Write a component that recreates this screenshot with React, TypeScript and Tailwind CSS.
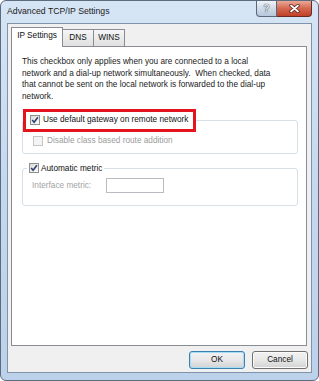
import React from 'react';

function Check({ checked, disabled }: { checked?: boolean; disabled?: boolean }) {
  return (
    <span
      className={`flex h-[10px] w-[10px] shrink-0 items-center justify-center border ${
        disabled
          ? 'border-[#c5c5c5] bg-[#f4f4f4]'
          : 'border-[#8e8f8f] bg-gradient-to-br from-[#dadada] to-[#fbfbfb]'
      }`}
    >
      {checked && (
        <svg width="8" height="8" viewBox="0 0 8 8">
          <path d="M1.2 4.1 L3.1 6.3 L6.9 1.2" fill="none" stroke="#2c3e73" strokeWidth="1.5" />
        </svg>
      )}
    </span>
  );
}

export default function App() {
  return (
    <div className="flex h-[381px] w-[319px] flex-col rounded-[6px] border border-[#5d6b7e] bg-gradient-to-b from-[#d6e5f5] via-[#c4d8ee] to-[#bcd2ea] px-[6px] pb-[7px] font-['Liberation_Sans',Arial,sans-serif] text-[8.25px] text-[#111]">
      {/* title bar */}
      <div className="flex h-[22px] shrink-0 items-center justify-between">
        <span className="text-[8.7px] text-[#1a1a1a]">Advanced TCP/IP Settings</span>
        <div className="flex h-[16px] self-start">
          <div className="flex w-[21px] items-center justify-center rounded-bl-[4px] border border-t-0 border-[#5a677b] bg-gradient-to-b from-[#eef3f8] via-[#cfdbe8] to-[#b6c6da]">
            <span className="text-[10px] font-bold leading-none text-[#e9edf2] [text-shadow:0_0_1px_#3b4556,0_0_1px_#3b4556]">?</span>
          </div>
          <div className="flex w-[35px] items-center justify-center rounded-br-[4px] border border-l-0 border-t-0 border-[#6b2a1f] bg-gradient-to-b from-[#e9a898] via-[#d4674f] to-[#c13f27]">
            <svg width="11" height="9" viewBox="0 0 11 9">
              <path d="M2 1.5 L9 7.5 M9 1.5 L2 7.5" stroke="#5a1c12" strokeWidth="3.4" strokeLinecap="round" />
              <path d="M2 1.5 L9 7.5 M9 1.5 L2 7.5" stroke="#ffffff" strokeWidth="1.8" strokeLinecap="round" />
            </svg>
          </div>
        </div>
      </div>

      {/* client area */}
      <div className="flex flex-1 flex-col border border-[#7f93ab] bg-[#f0f0f0] pb-[3px] pl-[3px] pr-[4px] pt-[3px]">
        <div className="flex h-[20px] items-end">
          <div className="relative z-10 flex h-[20px] w-[52px] items-center justify-center border border-b-0 border-[#898c95] bg-white pb-[2px]">
            IP Settings
          </div>
          <div className="-ml-px mb-px flex h-[17px] w-[32px] items-center justify-center border border-b-0 border-[#898c95] bg-gradient-to-b from-[#f6f6f6] to-[#e0e0e0]">
            DNS
          </div>
          <div className="-ml-px mb-px flex h-[17px] w-[32px] items-center justify-center border border-b-0 border-[#898c95] bg-gradient-to-b from-[#f6f6f6] to-[#e0e0e0]">
            WINS
          </div>
        </div>

        <div className="-mt-px h-[300px] border border-[#898c95] bg-white pl-[10px] pr-[8px] pt-[9px]">
          <p className="whitespace-nowrap leading-[11.7px] text-[#1b1b1b]">
            This checkbox only applies when you are connected to a local
            <br />
            network and a dial-up network simultaneously.&nbsp; When checked, data
            <br />
            that cannot be sent on the local network is forwarded to the dial-up
            <br />
            network.
          </p>

          <fieldset className="mt-[6px] rounded-[3px] border border-[#d5dfe5] pb-[6px]">
            <legend>
              <div className="flex h-[23px] items-center border-[3px] border-[#e3141d] pl-[4px] pr-[5px]">
                <Check checked />
                <span className="ml-[3px] leading-[11.7px]">Use default gateway on remote network</span>
              </div>
            </legend>
            <div className="mt-[3px] flex items-center pl-[10px] leading-[11.7px] text-[#9b9b9b]">
              <Check disabled />
              <span className="ml-[4px]">Disable class based route addition</span>
            </div>
          </fieldset>

          <fieldset className="mt-[9px] rounded-[3px] border border-[#d5dfe5] pb-[12px]">
            <legend className="ml-[4px] px-[2px]">
              <div className="flex items-center leading-[11.7px]">
                <Check checked />
                <span className="ml-[2px]">Automatic metric</span>
              </div>
            </legend>
            <div className="mt-[4px] flex items-center pl-[9px] leading-[11.7px] text-[#a3a3a3]">
              <span className="w-[74px]">Interface metric:</span>
              <div className="h-[15px] w-[58px] border border-[#b8bcc2] bg-white" />
            </div>
          </fieldset>
        </div>

        <div className="-mr-px mt-[5px] flex justify-end gap-[7px]">
          <button className="h-[18px] w-[56px] rounded-[3px] border border-[#3c7fb1] bg-gradient-to-b from-[#f2f2f2] via-[#e8e8e8] to-[#d2d2d2] shadow-[inset_0_0_0_1px_#a6dcf6]">
            OK
          </button>
          <button className="h-[18px] w-[56px] rounded-[3px] border border-[#707070] bg-gradient-to-b from-[#f2f2f2] via-[#e8e8e8] to-[#d2d2d2] shadow-[inset_0_0_0_1px_#fbfbfb]">
            Cancel
          </button>
        </div>
      </div>
    </div>
  );
}
